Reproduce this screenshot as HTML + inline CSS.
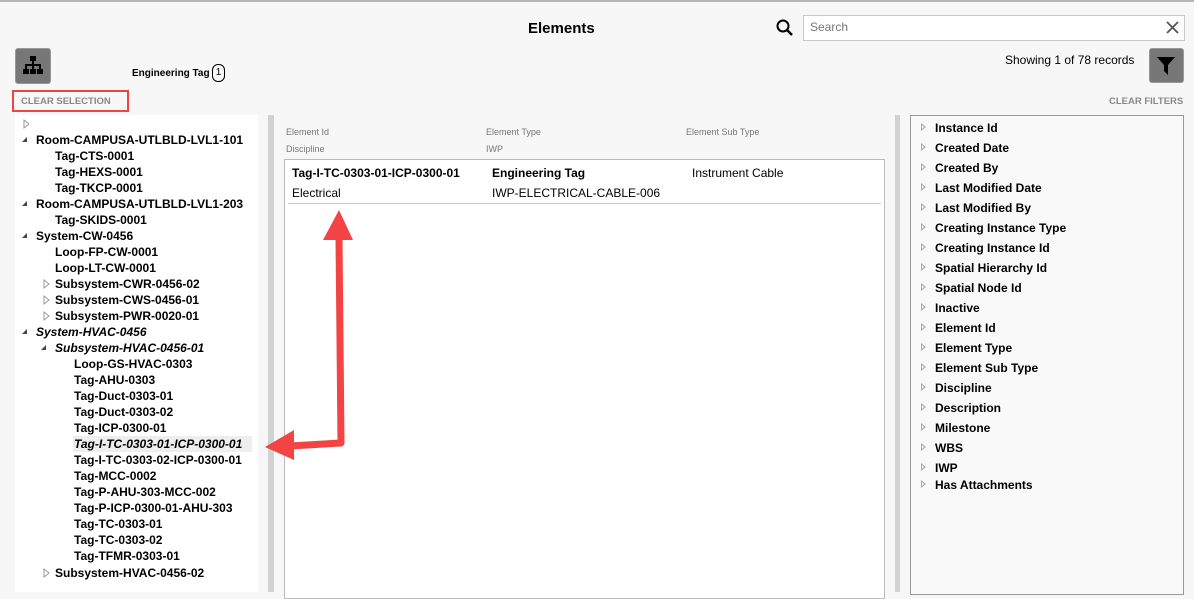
<!DOCTYPE html>
<html><head><meta charset="utf-8"><style>
*{margin:0;padding:0;box-sizing:border-box}
body{width:1194px;height:592px;overflow:hidden;background:#f7f7f7;font-family:"Liberation Sans",sans-serif;position:relative;color:#000}
.a{position:absolute;white-space:nowrap}
.b{font-weight:bold;font-size:12px}
.t{position:absolute;font-size:12px;font-weight:bold;white-space:nowrap;line-height:16px}
.tri{position:absolute;width:0;height:0}
.down{border-left:4px solid transparent;border-top:0;border-right:4px solid #444;border-bottom:4px solid #444;transform:none}
.r{position:absolute;font-size:12px;font-weight:bold;white-space:nowrap;line-height:16px;left:935px}
.ro{position:absolute;left:921px;width:0;height:0;border-top:4px solid transparent;border-bottom:4px solid transparent;border-left:5px solid #aaa}
.ro::after{content:"";position:absolute;left:-4px;top:-2px;border-top:2px solid transparent;border-bottom:2px solid transparent;border-left:2.5px solid #f9f9f9}
.lbl{position:absolute;font-size:9px;color:#777}
</style></head><body>
<div class="a" style="left:0;top:0;width:1194px;height:2px;background:#b5b5b5"></div>
<div class="a" style="left:528px;top:20px;font-size:15px;font-weight:bold">Elements</div>
<svg class="a" style="left:775px;top:18px" width="20" height="20" viewBox="0 0 20 20"><circle cx="8" cy="8" r="5.5" fill="none" stroke="#000" stroke-width="2"/><line x1="12" y1="12" x2="17" y2="17" stroke="#000" stroke-width="2.5"/></svg>
<div class="a" style="left:803px;top:15px;width:382px;height:26px;border:1px solid #c8c8c8;background:#fff"></div>
<div class="a" style="left:810px;top:20px;font-size:12px;color:#777">Search</div>
<svg class="a" style="left:1166px;top:21px" width="13" height="13"><path d="M1 1L12 12M12 1L1 12" stroke="#555" stroke-width="1.8"/></svg>
<div class="a" style="left:15px;top:48px;width:36px;height:36px;background:#777;border-radius:3px;border:1px solid #999"></div>
<svg class="a" style="left:22px;top:55px" width="22" height="22" viewBox="0 0 22 22"><rect x="8" y="1" width="6" height="5" fill="#000"/><rect x="10" y="6" width="2" height="4" fill="#000"/><rect x="3" y="9" width="16" height="2" fill="#000"/><rect x="3" y="9" width="2" height="5" fill="#000"/><rect x="10" y="9" width="2" height="5" fill="#000"/><rect x="17" y="9" width="2" height="5" fill="#000"/><rect x="1" y="14" width="6" height="5" fill="#000"/><rect x="8" y="14" width="6" height="5" fill="#000"/><rect x="15" y="14" width="6" height="5" fill="#000"/></svg>
<div class="a" style="left:132px;top:68px;font-size:10px;font-weight:bold">Engineering Tag</div>
<div class="a" style="left:212px;top:64px;width:13px;height:18px;border:1.5px solid #000;border-radius:6px;font-size:10px;text-align:center;line-height:15px">1</div>
<div class="a" style="left:12px;top:90px;width:117px;height:22px;border:2px solid #ee4444"></div>
<div class="a" style="left:21px;top:96px;font-size:9.5px;font-weight:bold;color:#888">CLEAR SELECTION</div>
<div class="a" style="left:1005px;top:53px;font-size:12px">Showing 1 of 78 records</div>
<div class="a" style="left:1149px;top:48px;width:35px;height:35px;background:#777;border-radius:3px;border:1px solid #999"></div>
<svg class="a" style="left:1156px;top:55px" width="20" height="22"><path d="M1 2H19L12 10V20L8 16V10Z" fill="#000"/></svg>
<div class="a" style="left:1109px;top:96px;font-size:9.5px;font-weight:bold;color:#888">CLEAR FILTERS</div>
<!-- left panel -->
<div class="a" style="left:15px;top:115px;width:243px;height:477px;background:#fff"></div>
<div class="a" style="left:268px;top:115px;width:6px;height:477px;background:#d2d2d2"></div>
<div class="a" style="left:895px;top:115px;width:5px;height:477px;background:#d2d2d2"></div>
<svg class="a" style="left:0;top:0" width="260" height="592">
<path d="M24 120L29 124L24 128Z" fill="none" stroke="#999"/>
<g fill="#444">
<path d="M27 137L27 142L22 142Z"/><path d="M27 201L27 206L22 206Z"/><path d="M27 233L27 238L22 238Z"/><path d="M27 329L27 334L22 334Z"/><path d="M46 345L46 350L41 350Z"/>
</g>
<g fill="none" stroke="#999"><path d="M44 280L49 284L44 288Z"/><path d="M44 296L49 300L44 304Z"/><path d="M44 312L49 316L44 320Z"/><path d="M44 569L49 573L44 577Z"/></g>
</svg>
<div class="a" style="left:73px;top:436px;width:179px;height:16px;background:#eee"></div>
<div class="t" style="left:36px;top:132px">Room-CAMPUSA-UTLBLD-LVL1-101</div>
<div class="t" style="left:55px;top:148px">Tag-CTS-0001</div>
<div class="t" style="left:55px;top:164px">Tag-HEXS-0001</div>
<div class="t" style="left:55px;top:180px">Tag-TKCP-0001</div>
<div class="t" style="left:36px;top:196px">Room-CAMPUSA-UTLBLD-LVL1-203</div>
<div class="t" style="left:55px;top:212px">Tag-SKIDS-0001</div>
<div class="t" style="left:36px;top:228px">System-CW-0456</div>
<div class="t" style="left:55px;top:244px">Loop-FP-CW-0001</div>
<div class="t" style="left:55px;top:260px">Loop-LT-CW-0001</div>
<div class="t" style="left:55px;top:276px">Subsystem-CWR-0456-02</div>
<div class="t" style="left:55px;top:292px">Subsystem-CWS-0456-01</div>
<div class="t" style="left:55px;top:308px">Subsystem-PWR-0020-01</div>
<div class="t" style="left:36px;top:324px;font-style:italic">System-HVAC-0456</div>
<div class="t" style="left:55px;top:340px;font-style:italic">Subsystem-HVAC-0456-01</div>
<div class="t" style="left:74px;top:356px">Loop-GS-HVAC-0303</div>
<div class="t" style="left:74px;top:372px">Tag-AHU-0303</div>
<div class="t" style="left:74px;top:388px">Tag-Duct-0303-01</div>
<div class="t" style="left:74px;top:404px">Tag-Duct-0303-02</div>
<div class="t" style="left:74px;top:420px">Tag-ICP-0300-01</div>
<div class="t" style="left:74px;top:436px;font-style:italic">Tag-I-TC-0303-01-ICP-0300-01</div>
<div class="t" style="left:74px;top:452px">Tag-I-TC-0303-02-ICP-0300-01</div>
<div class="t" style="left:74px;top:468px">Tag-MCC-0002</div>
<div class="t" style="left:74px;top:484px">Tag-P-AHU-303-MCC-002</div>
<div class="t" style="left:74px;top:500px">Tag-P-ICP-0300-01-AHU-303</div>
<div class="t" style="left:74px;top:516px">Tag-TC-0303-01</div>
<div class="t" style="left:74px;top:532px">Tag-TC-0303-02</div>
<div class="t" style="left:74px;top:548px">Tag-TFMR-0303-01</div>
<div class="t" style="left:55px;top:565px">Subsystem-HVAC-0456-02</div>
<!-- middle -->
<div class="lbl" style="left:286px;top:127px">Element Id</div>
<div class="lbl" style="left:486px;top:127px">Element Type</div>
<div class="lbl" style="left:686px;top:127px">Element Sub Type</div>
<div class="lbl" style="left:286px;top:144px">Discipline</div>
<div class="lbl" style="left:486px;top:144px">IWP</div>
<div class="a" style="left:284px;top:159px;width:601px;height:440px;background:#fff;border:1px solid #bbb"></div>
<div class="a" style="left:288px;top:203px;width:593px;height:1px;background:#ccc"></div>
<div class="a b" style="left:292px;top:166px">Tag-I-TC-0303-01-ICP-0300-01</div>
<div class="a b" style="left:492px;top:166px">Engineering Tag</div>
<div class="a" style="left:692px;top:166px;font-size:12px">Instrument Cable</div>
<div class="a" style="left:292px;top:186px;font-size:12px">Electrical</div>
<div class="a" style="left:492px;top:186px;font-size:12px">IWP-ELECTRICAL-CABLE-006</div>
<!-- right -->
<div class="a" style="left:910px;top:115px;width:274px;height:480px;border:1px solid #999;background:#f9f9f9"></div>
<div class="ro" style="top:123px"></div><div class="r" style="top:120px">Instance Id</div>
<div class="ro" style="top:143px"></div><div class="r" style="top:140px">Created Date</div>
<div class="ro" style="top:163px"></div><div class="r" style="top:160px">Created By</div>
<div class="ro" style="top:183px"></div><div class="r" style="top:180px">Last Modified Date</div>
<div class="ro" style="top:203px"></div><div class="r" style="top:200px">Last Modified By</div>
<div class="ro" style="top:223px"></div><div class="r" style="top:220px">Creating Instance Type</div>
<div class="ro" style="top:243px"></div><div class="r" style="top:240px">Creating Instance Id</div>
<div class="ro" style="top:263px"></div><div class="r" style="top:260px">Spatial Hierarchy Id</div>
<div class="ro" style="top:283px"></div><div class="r" style="top:280px">Spatial Node Id</div>
<div class="ro" style="top:303px"></div><div class="r" style="top:300px">Inactive</div>
<div class="ro" style="top:323px"></div><div class="r" style="top:320px">Element Id</div>
<div class="ro" style="top:343px"></div><div class="r" style="top:340px">Element Type</div>
<div class="ro" style="top:363px"></div><div class="r" style="top:360px">Element Sub Type</div>
<div class="ro" style="top:383px"></div><div class="r" style="top:380px">Discipline</div>
<div class="ro" style="top:403px"></div><div class="r" style="top:400px">Description</div>
<div class="ro" style="top:423px"></div><div class="r" style="top:420px">Milestone</div>
<div class="ro" style="top:443px"></div><div class="r" style="top:440px">WBS</div>
<div class="ro" style="top:463px"></div><div class="r" style="top:460px">IWP</div>
<div class="ro" style="top:480px"></div><div class="r" style="top:477px">Has Attachments</div>
<!-- arrow -->
<svg class="a" style="left:0;top:0" width="1194" height="592">
<path d="M339 238L341 443L290 446" fill="none" stroke="#f24444" stroke-width="7" stroke-linejoin="round"/>
<path d="M323 240L339 210L353 240Z" fill="#f24444"/>
<path d="M294 430L265 447L294 460Z" fill="#f24444"/>
</svg>
</body></html>
